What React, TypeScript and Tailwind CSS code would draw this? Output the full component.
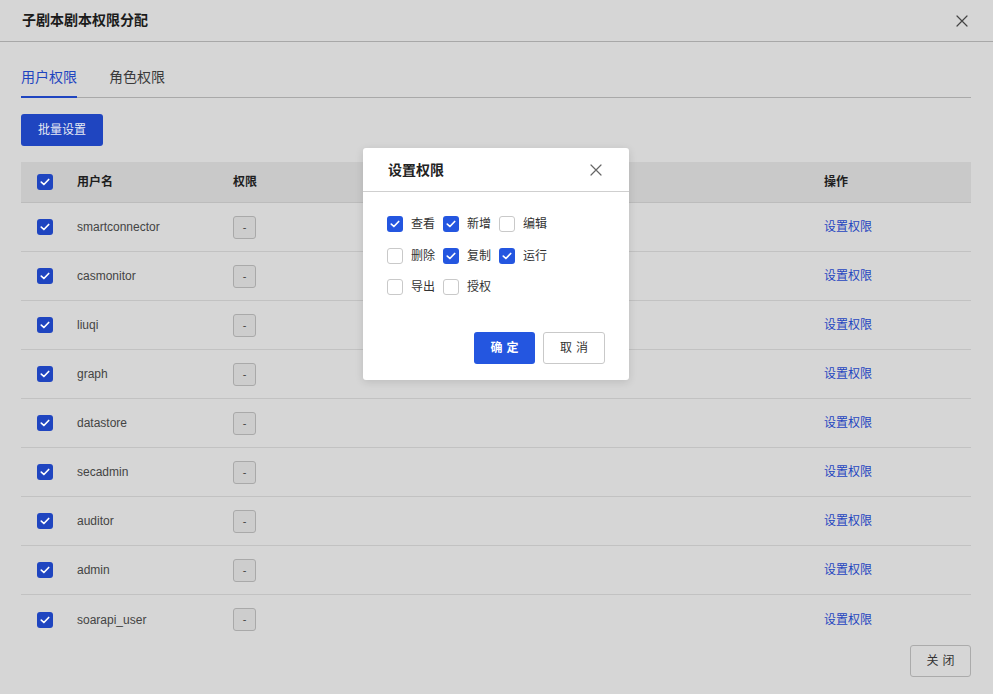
import React from "react";

const FONT = { fontFamily: '"Liberation Sans", "Noto Sans CJK SC", sans-serif' };

function Check({ checked, modal }: { checked: boolean; modal?: boolean }) {
  if (!checked) {
    return <span className="block w-[16px] h-[16px] rounded-[3px] border border-[#c9c9c9] bg-white shrink-0" />;
  }
  return (
    <span
      className={`flex items-center justify-center w-[16px] h-[16px] rounded-[3px] shrink-0 ${
        modal ? "bg-[#2456e0]" : "bg-[#1f45c0]"
      }`}
    >
      <svg width="10" height="8" viewBox="0 0 10 8" fill="none">
        <path d="M1.3 4.1 L3.9 6.5 L8.7 1.5" stroke="white" strokeWidth="1.7" strokeLinecap="round" strokeLinejoin="round" />
      </svg>
    </span>
  );
}

function XIcon({ color }: { color: string }) {
  return (
    <svg width="12" height="12" viewBox="0 0 12 12" fill="none">
      <path d="M1 1 L11 11 M11 1 L1 11" stroke={color} strokeWidth="1.2" strokeLinecap="round" />
    </svg>
  );
}

const users = [
  "smartconnector",
  "casmonitor",
  "liuqi",
  "graph",
  "datastore",
  "secadmin",
  "auditor",
  "admin",
  "soarapi_user",
];

const perms: { label: string; checked: boolean }[][] = [
  [
    { label: "查看", checked: true },
    { label: "新增", checked: true },
    { label: "编辑", checked: false },
  ],
  [
    { label: "删除", checked: false },
    { label: "复制", checked: true },
    { label: "运行", checked: true },
  ],
  [
    { label: "导出", checked: false },
    { label: "授权", checked: false },
  ],
];

export default function App() {
  return (
    <div className="relative w-[993px] h-[694px] bg-[#d6d6d6] overflow-hidden" style={FONT}>
      {/* header */}
      <div className="h-[42px] border-b border-[#a8a8a8] flex items-center justify-between pl-[22px] pr-[25px]">
        <span className="text-[14px] font-bold text-[#1b1b1b] leading-none -mt-[1px]">子剧本剧本权限分配</span>
        <XIcon color="#444" />
      </div>

      <div className="pl-[21px] pr-[22px]">
        {/* tabs */}
        <div className="mt-[22px] flex gap-[32px] border-b border-[#a9a9a9]">
          <div className="relative pt-[2px] pb-[9px] leading-[22px] text-[14px] text-[#1f45c0]">
            用户权限
            <span className="absolute left-0 right-0 -bottom-[1px] h-[2px] bg-[#1f45c0]" />
          </div>
          <div className="pt-[2px] pb-[9px] leading-[22px] text-[14px] text-[#3a3a3a]">角色权限</div>
        </div>

        {/* batch button */}
        <button className="mt-[16px] h-[32px] w-[82px] rounded-[3px] bg-[#1f45c0] text-[12px] text-[#e6e9f3] flex items-center justify-center">
          批量设置
        </button>

        {/* table */}
        <div className="mt-[16px] h-[481px] overflow-hidden">
          <div className="flex h-[41px] bg-[#c9c9c9] border-b border-[#bcbcbc] items-center text-[12px] text-[#1e1e1e] font-bold">
            <div className="w-[56px] pl-[16px] flex items-center">
              <Check checked />
            </div>
            <div className="w-[156px]">用户名</div>
            <div className="w-[591px]">权限</div>
            <div className="flex-1">操作</div>
          </div>
          {users.map((u, i) => (
            <div
              key={u}
              className={`flex h-[49px] items-center text-[12px] ${
                i < users.length - 1 ? "border-b border-[#c2c2c2]" : ""
              }`}
            >
              <div className="w-[56px] pl-[16px] flex items-center">
                <Check checked />
              </div>
              <div className="w-[156px] text-[#444]">{u}</div>
              <div className="w-[591px]">
                <span className="flex items-center justify-center w-[23px] h-[23px] rounded-[3px] border border-[#a9a9a9] bg-[#cdcdcd] text-[#444] text-[11px] leading-none">
                  -
                </span>
              </div>
              <div className="flex-1 text-[#1f45c0]">设置权限</div>
            </div>
          ))}
        </div>

        {/* footer */}
        <div className="flex justify-end mt-[2px]">
          <button className="h-[32px] w-[61px] rounded-[3px] border border-[#ababab] text-[12px] text-[#333] tracking-[4px] pl-[4px]">
            关闭
          </button>
        </div>
      </div>

      {/* modal */}
      <div className="absolute left-[363px] top-[148px] w-[266px] h-[232px] bg-white rounded-[3px] shadow-[0_2px_8px_rgba(0,0,0,0.12)] flex flex-col">
        <div className="h-[44px] border-b border-[#cfcfcf] flex items-center justify-between pl-[25px] pr-[27px]">
          <span className="text-[14px] font-bold text-[#222] leading-none">设置权限</span>
          <XIcon color="#666" />
        </div>
        <div className="pl-[24px] pt-[24px] flex flex-col gap-[15.5px]">
          {perms.map((row, ri) => (
            <div key={ri} className="flex h-[16px] items-center">
              {row.map((p) => (
                <div key={p.label} className="flex items-center w-[56px]">
                  <Check checked={p.checked} modal />
                  <span className="ml-[8px] text-[12px] text-[#333] leading-none">{p.label}</span>
                </div>
              ))}
            </div>
          ))}
        </div>
        <div className="mt-auto pb-[16px] pr-[24px] flex justify-end gap-[8px]">
          <button className="h-[32px] w-[61px] rounded-[3px] bg-[#2456e0] text-white text-[12px] font-bold tracking-[4px] pl-[4px]">
            确定
          </button>
          <button className="h-[32px] w-[62px] rounded-[3px] border border-[#c9c9c9] bg-white text-[#333] text-[12px] tracking-[4px] pl-[4px]">
            取消
          </button>
        </div>
      </div>
    </div>
  );
}
